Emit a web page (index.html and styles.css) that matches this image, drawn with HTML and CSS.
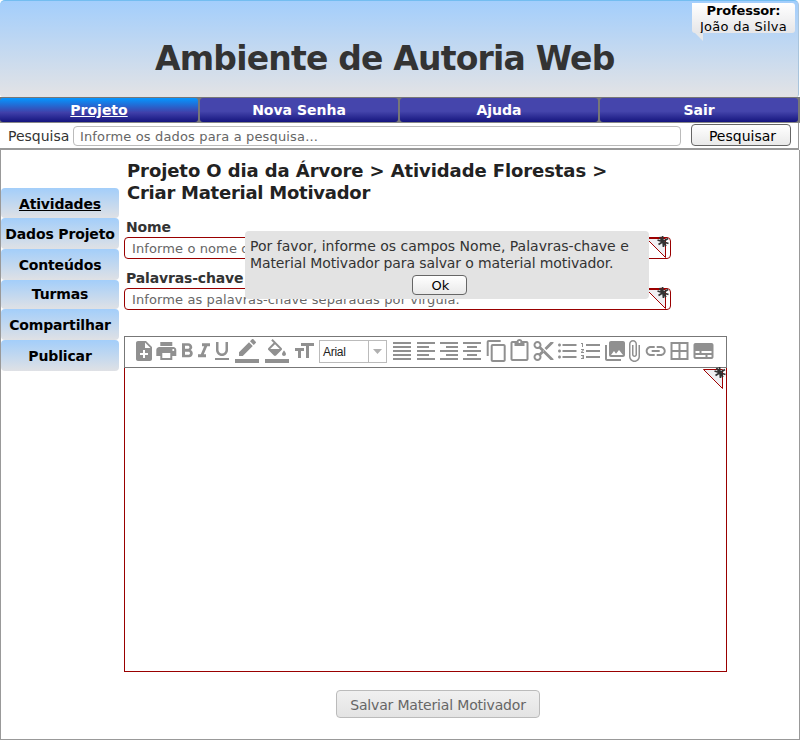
FILE: index.html
```html
<!DOCTYPE html>
<html lang="pt-BR">
<head>
<meta charset="utf-8">
<title>Ambiente de Autoria Web</title>
<link rel="stylesheet" href="styles.css">
</head>
<body>
<header class="banner">
  <h1>Ambiente de Autoria Web</h1>
  <div class="user"><b>Professor:</b><span>João da Silva</span>
    <svg class="tail" width="12" height="8" viewBox="0 0 12 8"><path d="M3 0h8v8z" fill="#e6e8ea"/></svg>
  </div>
</header>
<nav class="menu">
  <a class="active">Projeto</a><a>Nova Senha</a><a>Ajuda</a><a>Sair</a>
</nav>
<div class="search">
  <label>Pesquisa</label>
  <div class="query">Informe os dados para a pesquisa...</div>
  <div class="btn go">Pesquisar</div>
</div>
<main class="page">
  <aside class="side">
    <a class="active">Atividades</a><a>Dados Projeto</a><a>Conteúdos</a><a class="short">Turmas</a><a>Compartilhar</a><a>Publicar</a>
  </aside>
  <section class="content">
    <h2>Projeto O dia da Árvore &gt; Atividade Florestas &gt;<br><span>Criar Material Motivador</span></h2>
    <label class="name">Nome</label>
    <div class="field"><span>Informe o nome do</span><svg class="mark" width="23" height="22" viewBox="0 0 23 22"><use href="#required"/></svg></div>
    <label class="keys">Palavras-chave</label>
    <div class="field"><span>Informe as palavras-chave separadas por vírgula.</span><svg class="mark" width="23" height="22" viewBox="0 0 23 22"><use href="#required"/></svg></div>
    <div class="toolbar">
      <svg width="194" height="30" viewBox="125 337 194 30">
        <path transform="translate(132 339)" d="M14 2H6c-1.1 0-1.99.9-1.99 2L4 20c0 1.1.89 2 1.99 2H18c1.1 0 2-.9 2-2V8l-6-6zm2 14h-3v3h-2v-3H8v-2h3v-3h2v3h3v2zm-3-7V3.5L18.5 9H13z"/>
        <path transform="translate(154.3 339)" d="M19 8H5c-1.66 0-3 1.34-3 3v6h4v4h12v-4h4v-6c0-1.66-1.34-3-3-3zm-3 11H8v-5h8v5zm3-7c-.55 0-1-.45-1-1s.45-1 1-1 1 .45 1 1-.45 1-1 1zm-1-9H6v4h12V3z"/>
        <path transform="translate(175 339.3)" d="M15.6 10.79c.97-.67 1.65-1.77 1.65-2.79 0-2.26-1.75-4-4-4H7v14h7.04c2.09 0 3.71-1.7 3.71-3.79 0-1.52-.86-2.82-2.15-3.42zM10 6.5h3c.83 0 1.5.67 1.5 1.5s-.67 1.5-1.5 1.5h-3v-3zm3.5 9H10v-3h3.5c.83 0 1.5.67 1.5 1.5s-.67 1.5-1.5 1.5z"/>
        <path transform="translate(192 339.3)" d="M10 4v3h2.21l-3.42 8H6v3h8v-3h-2.21l3.42-8H18V4z"/>
        <path transform="translate(210 339)" d="M12 17c3.31 0 6-2.69 6-6V3h-2.5v8c0 1.93-1.57 3.5-3.5 3.5S8.5 12.93 8.5 11V3H6v8c0 3.31 2.69 6 6 6zm-7 2v2h14v-2H5z"/>
        <path transform="translate(235 339)" d="M17.75 7L14 3.25l-10 10V17h3.75l10-10zm2.96-2.96c.39-.39.39-1.02 0-1.41L18.37.29c-.39-.39-1.02-.39-1.41 0L15 2.25 18.75 6l1.96-1.96zM0 20h24v4H0z"/>
        <path transform="translate(265 339)" d="M16.56 8.94L7.62 0 6.21 1.41l2.38 2.38-5.15 5.15c-.59.59-.59 1.54 0 2.12l5.5 5.5c.29.29.68.44 1.06.44s.77-.15 1.06-.44l5.5-5.5c.59-.58.59-1.53 0-2.12zM5.21 10L10 5.21 14.79 10H5.21zM19 11.5s-2 2.17-2 3.5c0 1.1.9 2 2 2s2-.9 2-2c0-1.33-2-3.5-2-3.5zM0 20h24v4H0z"/>
        <path transform="translate(292 339)" d="M9 4v3h5v12h3V7h5V4H9zm-6 8h3v7h3v-7h3V9H3v3z"/>
      </svg>
      <div class="font"><span>Arial</span><i><svg width="9" height="5" viewBox="0 0 9 5"><path d="M0 0h9L4.500 5z"/></svg></i></div>
      <svg width="339" height="30" viewBox="387 337 339 30">
        <path d="M393 342h18v2h-18zm0 4h18v2h-18zm0 4h18v2h-18zm0 4h18v2h-18zm0 4h18v2h-18z"/>
        <path d="M417 342h18v2h-18zm0 4h12v2h-12zm0 4h18v2h-18zm0 4h12v2h-12zm0 4h18v2h-18z"/>
        <path d="M440 342h18v2h-18zm6 4h12v2h-12zm-6 4h18v2h-18zm6 4h12v2h-12zm-6 4h18v2h-18z"/>
        <path d="M463 342h18v2h-18zm4 4h10v2h-10zm-4 4h18v2h-18zm4 4h10v2h-10zm-4 4h18v2h-18z"/>
        <path transform="translate(484.700 339)" d="M16 1H4c-1.1 0-2 .9-2 2v14h2V3h12V1zm3 4H8c-1.1 0-2 .9-2 2v14c0 1.1.9 2 2 2h11c1.1 0 2-.9 2-2V7c0-1.1-.9-2-2-2zm0 16H8V7h11v14z"/>
        <path transform="translate(507.500 339)" d="M19 2h-4.18C14.4.84 13.3 0 12 0c-1.3 0-2.4.84-2.82 2H5c-1.1 0-2 .9-2 2v16c0 1.1.9 2 2 2h14c1.1 0 2-.9 2-2V4c0-1.1-.9-2-2-2zm-7 0c.55 0 1 .45 1 1s-.45 1-1 1-1-.45-1-1 .45-1 1-1zm7 18H5V4h2v3h10V4h2v16z"/>
        <path transform="translate(531.500 339)" d="M9.640 7.640c.23-.5.36-1.05.36-1.640 0-2.210-1.790-4-4-4S2 3.790 2 6s1.790 4 4 4c.59 0 1.140-.13 1.640-.36L10 12l-2.360 2.360C7.140 14.130 6.590 14 6 14c-2.210 0-4 1.790-4 4s1.790 4 4 4 4-1.790 4-4c0-.59-.13-1.140-.36-1.640L12 14l7 7h3v-1L9.640 7.640zM6 8c-1.100 0-2-.89-2-2s.9-2 2-2 2 .89 2 2-.9 2-2 2zm0 12c-1.100 0-2-.89-2-2s.9-2 2-2 2 .89 2 2-.9 2-2 2zm6-7.500c-.28 0-.5-.22-.5-.5s.22-.5.5-.5.5.22.5.5-.22.5-.5.5zM19 3l-6 6 2 2 7-7V3z"/>
        <path transform="translate(555.500 339)" d="M4 10.500c-.83 0-1.500.67-1.500 1.500s.67 1.500 1.500 1.500 1.500-.67 1.500-1.500-.67-1.500-1.500-1.500zm0-6c-.83 0-1.500.67-1.500 1.500S3.170 7.500 4 7.500 5.500 6.830 5.500 6 4.830 4.500 4 4.500zm0 12c-.83 0-1.500.68-1.500 1.500s.68 1.500 1.500 1.500 1.500-.68 1.500-1.500-.67-1.500-1.500-1.500zM7 19h14v-2H7v2zm0-6h14v-2H7v2zm0-8v2h14V5H7z"/>
        <path transform="translate(579 339)" d="M2 17h2v.5H3v1h1v.5H2v1h3v-4H2v1zm1-9h1V4H2v1h1v3zm-1 3h1.800L2 13.100v.9h3v-1H3.200L5 10.900V10H2v1zm5-6v2h14V5H7zm0 14h14v-2H7v2zm0-6h14v-2H7v2z"/>
        <path transform="translate(603 339)" d="M22 16V4c0-1.100-.9-2-2-2H8c-1.100 0-2 .9-2 2v12c0 1.100.9 2 2 2h12c1.100 0 2-.9 2-2zm-11-4l2.030 2.710L16 11l4 5H8l3-4zM2 6v14c0 1.100.9 2 2 2h14v-2H4V6H2z"/>
        <path transform="translate(622 339)" d="M16.500 6v11.500c0 2.210-1.790 4-4 4s-4-1.790-4-4V5c0-1.380 1.120-2.500 2.500-2.500s2.500 1.120 2.500 2.500v10.500c0 .55-.45 1-1 1s-1-.45-1-1V6H10v9.500c0 1.380 1.120 2.500 2.500 2.500s2.500-1.120 2.500-2.500V5c0-2.210-1.790-4-4-4S7 2.790 7 5v12.500c0 3.040 2.460 5.500 5.500 5.500s5.500-2.460 5.500-5.500V6h-1.500z"/>
        <path transform="translate(643.700 339)" d="M3.900 12c0-1.710 1.390-3.100 3.100-3.100h4V7H7c-2.760 0-5 2.240-5 5s2.240 5 5 5h4v-1.900H7c-1.710 0-3.100-1.390-3.100-3.100zM8 13h8v-2H8v2zm9-6h-4v1.900h4c1.710 0 3.100 1.390 3.100 3.100s-1.390 3.100-3.100 3.100h-4V17h4c2.760 0 5-2.240 5-5s-2.240-5-5-5z"/>
        <path transform="translate(667.500 339)" d="M3 3v18h18V3H3zm8 16H5v-6h6v6zm0-8H5V5h6v6zm8 8h-6v-6h6v6zm0-8h-6V5h6v6z"/>
        <path transform="translate(691.500 339)" d="M20 4H4c-1.100 0-2 .9-2 2v12c0 1.100.9 2 2 2h16c1.100 0 2-.9 2-2V6c0-1.100-.9-2-2-2zM4 12h4v2H4v-2zm10 6H4v-2h10v2zm6 0h-4v-2h4v2zm0-4H10v-2h10v2z"/>
      </svg>
    </div>
    <div class="editor"><svg class="mark" width="23" height="22" viewBox="0 0 23 22"><g id="required"><path d="M.5 1.500h19v19z" fill="#f0f0f3" stroke="#a00000"/><path d="M16.500-1l1 11M11.500 3l11 3.500M22 1.500L12.500 7.500M13.500 0l6.500 9" stroke="#333" stroke-width="1.800" fill="none"/></g></svg></div>
    <div class="btn save">Salvar Material Motivador</div>
  </section>
</main>
<div class="dialog">
  <p>Por favor, informe os campos Nome, Palavras-chave e<br><span>Material Motivador para salvar o material motivador.</span></p>
  <div class="btn ok">Ok</div>
</div>
</body>
</html>
```
FILE: styles.css
```css
* { box-sizing: border-box; }
body { margin: 0; width: 800px; height: 740px; overflow: hidden; background: #fff; color: #333; font: 14px/17px "DejaVu Sans", Verdana, sans-serif; white-space: nowrap; }
.banner { height: 97px; width: 799px; border-top: 1px solid #73bdf0; border-right: 1px solid #a8c4dc; border-radius: 5px 5px 3px 3px; background: linear-gradient(#a3cefc, #e3e3e5); position: relative; }
h1 { margin: 0; padding: 38px 0 0 155px; font-size: 33px; line-height: 40px; letter-spacing: -.8px; }
.user { position: absolute; left: 692px; top: 2px; width: 103px; height: 30px; display: flex; flex-direction: column; align-items: center; border-radius: 0 3px 3px 3px; background: linear-gradient(#fff, #e6e6e8); color: #000; font-size: 13px; line-height: 16px; }
.user b { letter-spacing: -.15px; }
.user span { letter-spacing: .3px; }
.tail { position: absolute; left: 0; top: 30px; }
.menu { display: grid; grid-template-columns: repeat(4, 200px); height: 26px; background: #777; padding-top: 1px; border-bottom: 1px solid #888; }
.menu a { margin-right: 2px; height: 24px; border-radius: 3px; text-align: center; color: #fff; font-weight: bold; line-height: 24px; background: linear-gradient(#4545ac 55%, #15157e); }
.menu .active { background: linear-gradient(#0596ff, #4040aa 60%, #15157e); text-decoration: underline; }
.search { height: 27px; width: 799px; border-right: 1px solid #999; border-bottom: 2px solid #999; display: flex; padding: 1px 7px 0 8px; }
.search label { width: 65px; line-height: 25px; }
.query { width: 608px; height: 20px; margin: 2px 10px 0 0; border: 1px solid #bbb; border-radius: 4px; padding-left: 6px; line-height: 20px; font-size: 13px; letter-spacing: .15px; color: #666; }
.btn { border: 1px solid #666; border-radius: 4px; background: linear-gradient(#fff, #e9e9e9); color: #000; text-align: center; }
.go { width: 100px; height: 22px; line-height: 22px; padding-left: 3px; }
.page { height: 590px; border: 1px solid #999; border-top: 0; display: flex; }
.side { width: 118px; margin: 38px 5px 0 0; }
.side a { display: block; height: 31px; line-height: 33px; text-align: center; color: #000; font-weight: bold; letter-spacing: -.15px; border-radius: 4px; background: linear-gradient(#a3cefa, #dfe1e5); }
.side .active { text-decoration: underline; height: 30px; }
.side .short { height: 29px; line-height: 29px; }
.content { width: 603px; }
h2 { margin: 0; padding: 10px 0 0 3px; height: 68px; color: #222; font-size: 18px; line-height: 22px; letter-spacing: -.09px; }
h2 span { letter-spacing: -.25px; }
.name, .keys { display: block; height: 19px; line-height: 19px; font-weight: bold; letter-spacing: -.15px; padding-left: 2px; }
.keys { margin-top: 10px; }
.field { width: 547px; height: 22px; border: 1px solid #900; border-radius: 4px; position: relative; padding-left: 7px; line-height: 21px; font-size: 13px; letter-spacing: .11px; color: #666; }
.mark { position: absolute; right: 1px; top: -1px; overflow: visible; }
.toolbar { height: 32px; margin-top: 26px; border: 1px solid #777; display: flex; fill: #909090; }
.font { width: 68px; height: 23px; margin-top: 3px; border: 1px solid #bbb; display: flex; font: 12px/22px "Liberation Sans", Arial, sans-serif; letter-spacing: -.3px; color: #222; }
.font span { width: 48px; padding-left: 3px; }
.font i { flex: 1; border-left: 1px solid #bbb; display: flex; align-items: center; justify-content: center; fill: #b0b0b0; }
.editor { height: 304px; border: 1px solid #900; border-top: 0; position: relative; }
.editor .mark { right: 0; top: 0; }
.save { width: 204px; height: 28px; margin: 18px 0 0 212px; line-height: 28px; letter-spacing: -.17px; color: #666; border-color: #bbb; background: linear-gradient(#f0f0f0, #e3e3e3); }
.dialog { position: absolute; left: 245px; top: 231px; width: 404px; height: 68px; padding: 7px 5px; border-radius: 4px; background: #e3e3e3; }
.dialog p { margin: 0; }
.dialog span { letter-spacing: -.12px; }
.ok { width: 55px; height: 20px; line-height: 19px; margin: 3px 0 0 162px; padding-left: 2px; font-size: 13px; }
```
